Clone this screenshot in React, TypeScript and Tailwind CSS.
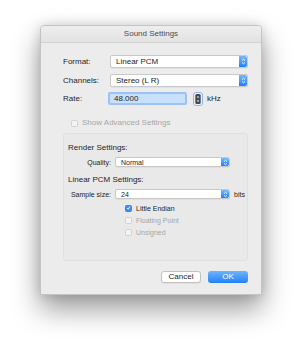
import React from 'react';

const font = { fontFamily: '"Liberation Sans", Arial, sans-serif' };

function Arrows() {
  return (
    <div className="flex w-[8px] items-center justify-center rounded-r-[2px] bg-gradient-to-b from-[#74b8fb] to-[#1d80f8]">
      <svg width="5" height="7" viewBox="0 0 5 7" fill="none" stroke="white" strokeWidth="0.9">
        <path d="M1 2.6 L2.5 1.2 L4 2.6" />
        <path d="M1 4.4 L2.5 5.8 L4 4.4" />
      </svg>
    </div>
  );
}

function Popup({ value, className, small }: { value: string; className: string; small?: boolean }) {
  return (
    <div
      className={`flex rounded-[2px] border border-[#c9c9c9] bg-white shadow-[0_0.5px_0.5px_rgba(0,0,0,0.08)] ${className}`}
    >
      <div
        className={`flex flex-1 items-center pl-[5px] leading-none text-[#1e1e1e] ${
          small ? 'text-[7px]' : 'text-[8px]'
        }`}
      >
        {value}
      </div>
      <Arrows />
    </div>
  );
}

function Check({
  checked,
  disabled,
  small,
  label,
}: {
  checked?: boolean;
  disabled?: boolean;
  small?: boolean;
  label: string;
}) {
  return (
    <div className="flex h-[12px] items-center">
      <div
        className={`flex h-[7px] w-[7px] items-center justify-center rounded-[1.5px] border ${
          checked
            ? 'border-[#2f86f6] bg-[#3b8ff7]'
            : disabled
              ? 'border-[#d2d2d2] bg-[#f3f3f3]'
              : 'border-[#b4b4b4] bg-white'
        }`}
      >
        {checked && (
          <svg width="6" height="6" viewBox="0 0 6 6" fill="none" stroke="white" strokeWidth="1.1">
            <path d="M1.2 3.1 L2.5 4.4 L4.9 1.2" />
          </svg>
        )}
      </div>
      <span
        className={`ml-[4px] leading-none ${small ? 'text-[7px]' : 'text-[8px]'} ${
          disabled ? 'text-[#a6a6a6]' : 'text-[#1e1e1e]'
        }`}
      >
        {label}
      </span>
    </div>
  );
}

export default function App() {
  return (
    <div className="h-[349px] w-[302px] bg-white pl-[40px] pt-[25px]" style={font}>
      <div className="flex h-[270px] w-[222px] flex-col overflow-hidden rounded-t-[4px] border border-[#c4c4c4] bg-[#ececec] shadow-[0_14px_28px_rgba(0,0,0,0.4),0_0_12px_rgba(0,0,0,0.14)]">
        {/* title bar */}
        <div className="flex h-[17px] items-center justify-center border-b border-[#d2d2d2] bg-gradient-to-b from-[#eeeeee] to-[#e2e2e2] text-[8px] text-[#4d4d4d]">
          Sound Settings
        </div>

        <div className="flex flex-1 flex-col pl-[22px] pr-[13px]">
          {/* Format */}
          <div className="mt-[12px] flex h-[13px] items-center">
            <span className="w-[47px] text-[8px] leading-none text-[#1e1e1e]">Format:</span>
            <Popup value="Linear PCM" className="h-[13px] flex-1" />
          </div>

          {/* Channels */}
          <div className="mt-[6px] flex h-[13px] items-center">
            <span className="w-[47px] text-[8px] leading-none text-[#1e1e1e]">Channels:</span>
            <Popup value="Stereo (L R)" className="h-[13px] flex-1" />
          </div>

          {/* Rate */}
          <div className="mt-[5px] flex h-[13px] items-center">
            <span className="w-[45px] text-[8px] leading-none text-[#1e1e1e]">Rate:</span>
            <div className="flex h-[13px] w-[79px] items-center rounded-[2px] border-2 border-[#9cc3f5] bg-[#c9e0fb] pl-[4px] text-[8px] leading-none text-[#1e1e1e]">
              48.000
            </div>
            <svg className="ml-[6px]" width="10" height="14" viewBox="0 0 10 14">
              <rect x="0.5" y="0.5" width="9" height="13" rx="2.5" fill="#f2f2f2" stroke="#8db5ea" />
              <rect x="2.3" y="2" width="5.4" height="10" rx="1.5" fill="#3f4a5a" />
              <path d="M3.6 5.6 L5 4 L6.4 5.6 Z" fill="white" />
              <path d="M3.6 8.4 L5 10 L6.4 8.4 Z" fill="white" />
            </svg>
            <span className="ml-[4px] text-[8px] leading-none text-[#1e1e1e]">kHz</span>
          </div>

          {/* Show advanced */}
          <div className="ml-[8px] mt-[12px]">
            <Check disabled label="Show Advanced Settings" />
          </div>

          {/* Group box */}
          <div className="mt-[4px] flex h-[128px] flex-col rounded-[3px] border border-[#e0e0e0] bg-[#e9e9e9] pl-[4px]">
            <div className="mt-[9px] text-[8px] leading-[10px] text-[#1e1e1e]">Render Settings:</div>
            <div className="mt-[4px] flex h-[10px] items-center">
              <span className="w-[47px] pr-[4px] text-right text-[7px] leading-none text-[#1e1e1e]">Quality:</span>
              <Popup small value="Normal" className="h-[10px] w-[115px]" />
            </div>

            <div className="mt-[8px] text-[8px] leading-[10px] text-[#1e1e1e]">Linear PCM Settings:</div>
            <div className="mt-[4px] flex h-[10px] items-center">
              <span className="w-[47px] whitespace-nowrap pr-[4px] text-right text-[7px] leading-none text-[#1e1e1e]">
                Sample size:
              </span>
              <Popup small value="24" className="h-[10px] w-[115px]" />
              <span className="ml-[4px] text-[7px] leading-none text-[#1e1e1e]">bits</span>
            </div>

            <div className="ml-[57px] mt-[3px] flex flex-col">
              <Check checked small label="Little Endian" />
              <Check disabled small label="Floating Point" />
              <Check disabled small label="Unsigned" />
            </div>
          </div>

          {/* Buttons */}
          <div className="mt-[10px] flex justify-end gap-[7px]">
            <div className="flex h-[12px] w-[40px] items-center justify-center rounded-[3px] border border-[#c2c2c2] bg-white text-[8px] leading-none text-[#1e1e1e] shadow-[0_0.5px_0.5px_rgba(0,0,0,0.1)]">
              Cancel
            </div>
            <div className="flex h-[12px] w-[40px] items-center justify-center rounded-[3px] bg-gradient-to-b from-[#6db4fb] to-[#1c81f8] text-[8px] leading-none text-white">
              OK
            </div>
          </div>
        </div>
      </div>
    </div>
  );
}
